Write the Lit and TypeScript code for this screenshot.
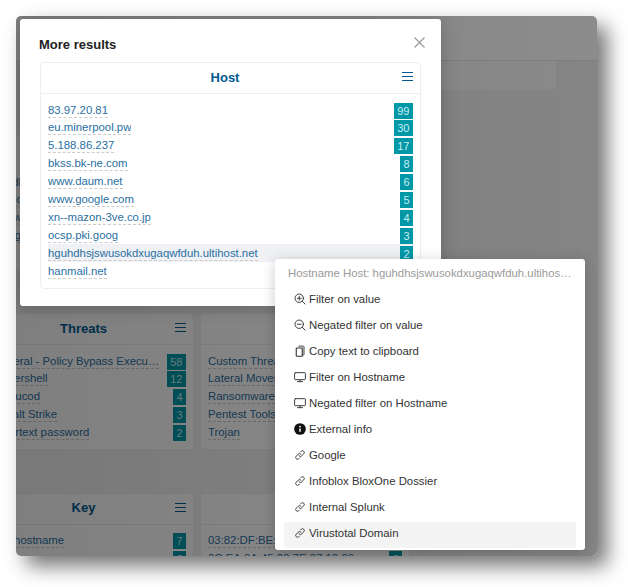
import { LitElement, html, css, svg } from "lit";
import { customElement } from "lit/decorators.js";

type Row = { label: string; count?: number };

const hosts: Row[] = [
  { label: "83.97.20.81", count: 99 },
  { label: "eu.minerpool.pw", count: 30 },
  { label: "5.188.86.237", count: 17 },
  { label: "bkss.bk-ne.com", count: 8 },
  { label: "www.daum.net", count: 6 },
  { label: "www.google.com", count: 5 },
  { label: "xn--mazon-3ve.co.jp", count: 4 },
  { label: "ocsp.pki.goog", count: 3 },
  { label: "hguhdhsjswusokdxugaqwfduh.ultihost.net", count: 2 },
  { label: "hanmail.net" },
];

const threats: Row[] = [
  { label: "General - Policy Bypass Execu…", count: 58 },
  { label: "Powershell", count: 12 },
  { label: "Emoucod", count: 4 },
  { label: "Cobalt Strike", count: 3 },
  { label: "Cleartext password", count: 2 },
];

const categories: Row[] = [
  { label: "Custom Threat", count: 9 },
  { label: "Lateral Movement", count: 7 },
  { label: "Ransomware", count: 5 },
  { label: "Pentest Tools", count: 3 },
  { label: "Trojan", count: 2 },
];

const keys: Row[] = [
  { label: "SNI hostname", count: 7 },
  { label: "SNI", count: 3 },
];

const fingerprints: Row[] = [
  { label: "03:82:DF:BE:11:7C", count: 4 },
  { label: "0C:EA:0A:45:20:7E:07:10:00", count: 3 },
];

// only the edge of this card shows beside the modal
const sideRows: Row[] = [
  { label: "Bundle", count: 9 },
  { label: "Magic", count: 7 },
  { label: "Arrow", count: 4 },
  { label: "Using", count: 2 },
];

const icon = (body: unknown) => html`<svg class="ico" viewBox="0 0 16 16" fill="none" stroke="currentColor" stroke-width="1.25" stroke-linecap="round" stroke-linejoin="round">${body}</svg>`;

const zoomIn = svg`<circle cx="7" cy="7" r="5.6"/><path d="M11.2 11.2l3.6 3.6M7 4.4v5.2M4.4 7h5.2"/>`;
const zoomOut = svg`<circle cx="7" cy="7" r="5.6"/><path d="M11.2 11.2l3.6 3.6M4.4 7h5.2"/>`;
const copy = svg`<path d="M6.5 1.5h5.8a1 1 0 0 1 1 1v10a1 1 0 0 1-1 1h-1"/><path d="M4 4h6.5a.5.5 0 0 1 .5.5v10a.5.5 0 0 1-.5.5H4a1 1 0 0 1-1-1V5a1 1 0 0 1 1-1z" stroke-width="1.5"/>`;
const monitor = svg`<rect x="0.8" y="2.2" width="14.4" height="9.4" rx="1"/><path d="M8 11.6v2.6M4.6 14.2h6.8"/>`;
const link = svg`<path d="M6.8 9.2a2.4 2.4 0 0 0 3.4 0l2.8-2.8a2.4 2.4 0 0 0-3.4-3.4l-1 1"/><path d="M9.2 6.8a2.4 2.4 0 0 0-3.4 0l-2.8 2.8a2.4 2.4 0 0 0 3.4 3.4l1-1"/>`;
const info = svg`<circle cx="8" cy="8" r="7.8" fill="#111" stroke="none"/><path d="M8 7.2v4.4" stroke="#fff" stroke-width="2" stroke-linecap="butt"/><circle cx="8" cy="4.7" r="1.2" fill="#fff" stroke="none"/>`;

const menuItems = [
  { label: "Filter on value", glyph: zoomIn },
  { label: "Negated filter on value", glyph: zoomOut },
  { label: "Copy text to clipboard", glyph: copy },
  { label: "Filter on Hostname", glyph: monitor },
  { label: "Negated filter on Hostname", glyph: monitor },
  { label: "External info", glyph: info },
  { label: "Google", glyph: link },
  { label: "Infoblox BloxOne Dossier", glyph: link },
  { label: "Internal Splunk", glyph: link },
  { label: "Virustotal Domain", glyph: link, active: true },
];

@customElement("app-root")
export class AppRoot extends LitElement {
  static styles = css`
    :host {
      display: block;
      width: 628px;
      height: 587px;
      background: #fff;
      font-family: "Liberation Sans", Arial, sans-serif;
      font-size: 11.375px;
      overflow: hidden;
    }
    .screen {
      position: absolute;
      left: 16px;
      top: 16px;
      width: 581px;
      height: 540px;
      border-radius: 5px;
      overflow: hidden;
    }
    .frame {
      position: absolute;
      left: 16px;
      top: 16px;
      width: 581px;
      height: 540px;
      border-radius: 5px;
      box-shadow: 10px 10px 20px rgba(0, 0, 0, 0.55);
    }
    .dash {
      width: 613px;
      height: 100%;
      margin-left: -32px;
      background: #f2f2f2;
      display: grid;
      grid-template-columns: 210px 210px 140px;
      grid-template-rows: 45px 73px 179px 179.5px 80px;
      column-gap: 6px;
      align-content: start;
    }
    .topbar {
      grid-column: 1 / -1;
      width: 613px;
      background: #fff;
      border-bottom: 1px solid #e6e6e6;
      box-sizing: border-box;
    }
    .strip {
      grid-row: 2;
      grid-column: 2 / -1;
      height: 29px;
      background: #fbfbfb;
      border-radius: 0 0 4px 4px;
    }
    .card {
      height: 136px;
      box-sizing: border-box;
      background: #fff;
      border: 1px solid #eee;
      border-radius: 4px;
      overflow: hidden;
    }
    .card.side { grid-row: 3; grid-column: 1; }
    .card.low { grid-row: 4; height: 137px; }
    .card.bottom { grid-row: 5; height: 80px; }
    .head {
      height: 31px;
      box-sizing: border-box;
      padding: 0 11px 2px 0;
      display: flex;
      align-items: center;
      justify-content: center;
      font-weight: bold;
      font-size: 13px;
      color: #005a91;
      border-bottom: 1px solid #eee;
      position: relative;
    }
    .burger {
      position: absolute;
      right: 7px;
      top: 8px;
      width: 11px;
      height: 11px;
      color: #005a91;
    }
    .rows {
      display: flex;
      flex-direction: column;
      padding: 7px 7px 0;
    }
    .row {
      height: 17.9px;
      display: flex;
      align-items: flex-start;
      justify-content: space-between;
      color: #2b6f9f;
    }
    .t {
      margin-top: 1.5px;
      line-height: 14px;
      border-bottom: 1px dashed #ccc;
      white-space: nowrap;
      overflow: hidden;
      text-overflow: ellipsis;
    }
    .row.hot { background: #eff1f5; }
    .badge {
      flex: none;
      height: 16px;
      padding: 0 3.5px;
      margin-top: 1.5px;
      background: #0097a7;
      color: #c8eef2;
      font-size: 11px;
      line-height: 16px;
      text-align: center;
    }
    .veil {
      position: absolute;
      inset: 0;
      background: linear-gradient(to left, rgba(0, 0, 0, 0.45), rgba(0, 0, 0, 0.5));
    }
    .modal {
      position: absolute;
      left: 4px;
      top: 3px;
      width: 421px;
      height: 287px;
      box-sizing: border-box;
      padding: 43px 20px 0;
      background: #fff;
      border-radius: 3px;
      box-shadow: 0 0 18px rgba(0, 0, 0, 0.22);
    }
    .modal h2 {
      position: absolute;
      left: 19px;
      top: 18px;
      margin: 0;
      font-size: 13px;
      font-weight: bold;
      color: #222;
    }
    .close {
      position: absolute;
      right: 16px;
      top: 18px;
      width: 11px;
      height: 11px;
      color: #999;
    }
    .modal .card { height: 227px; }
    .menu {
      position: absolute;
      left: 259px;
      top: 243px;
      width: 310px;
      height: 291px;
      box-sizing: border-box;
      padding: 0 9px;
      background: #fff;
      border-radius: 3px;
      box-shadow: 0 2px 14px rgba(0, 0, 0, 0.2);
    }
    .title {
      height: 29px;
      line-height: 29px;
      padding: 0 4px;
      color: #9a9a9a;
      white-space: nowrap;
      overflow: hidden;
      text-overflow: ellipsis;
    }
    .item {
      height: 26px;
      box-sizing: border-box;
      padding: 0 0 4px 10px;
      display: flex;
      align-items: center;
      gap: 3px;
      color: #333;
      border-radius: 3px;
    }
    .item.active { background: #f4f4f4; }
    .ico { width: 12px; height: 12px; flex: none; color: #333; }
  `;

  private burger() {
    return html`<svg class="burger" viewBox="0 0 11 11" fill="none" stroke="currentColor" stroke-width="1.1"><path d="M0 1.5h11M0 5.5h11M0 9.5h11"/></svg>`;
  }

  private rows(list: Row[], hotIndex = -1) {
    return html`<div class="rows">
      ${list.map(
        (r, i) => html`<div class="row ${i === hotIndex ? "hot" : ""}">
          <span class="t">${r.label}</span>
          ${r.count ? html`<span class="badge">${r.count}</span>` : ""}
        </div>`
      )}
    </div>`;
  }

  private card(title: string, list: Row[], cls = "") {
    return html`<div class="card ${cls}">
      <div class="head">${title}${this.burger()}</div>
      ${this.rows(list)}
    </div>`;
  }

  render() {
    return html`<div class="frame"></div>
    <div class="screen">
      <div class="dash">
        <div class="topbar"></div>
        <div class="strip"></div>
        ${this.card("Source", sideRows, "side")}
        ${this.card("Threats", threats, "low")}
        ${this.card("Tags", categories, "low")}
        ${this.card("Key", keys, "bottom")}
        ${this.card("Cert", fingerprints, "bottom")}
      </div>
      <div class="veil"></div>
      <div class="modal">
        <h2>More results</h2>
        <svg class="close" viewBox="0 0 11 11" fill="none" stroke="currentColor" stroke-width="1.1"><path d="M.5.5l10 10M10.5.5l-10 10"/></svg>
        <div class="card">
          <div class="head">Host${this.burger()}</div>
          ${this.rows(hosts, 8)}
        </div>
      </div>
      <div class="menu">
        <div class="title">Hostname Host: hguhdhsjswusokdxugaqwfduh.ultihost.net</div>
        ${menuItems.map(
          (m) => html`<div class="item ${m.active ? "active" : ""}">${icon(m.glyph)}<span>${m.label}</span></div>`
        )}
      </div>
    </div>`;
  }
}
